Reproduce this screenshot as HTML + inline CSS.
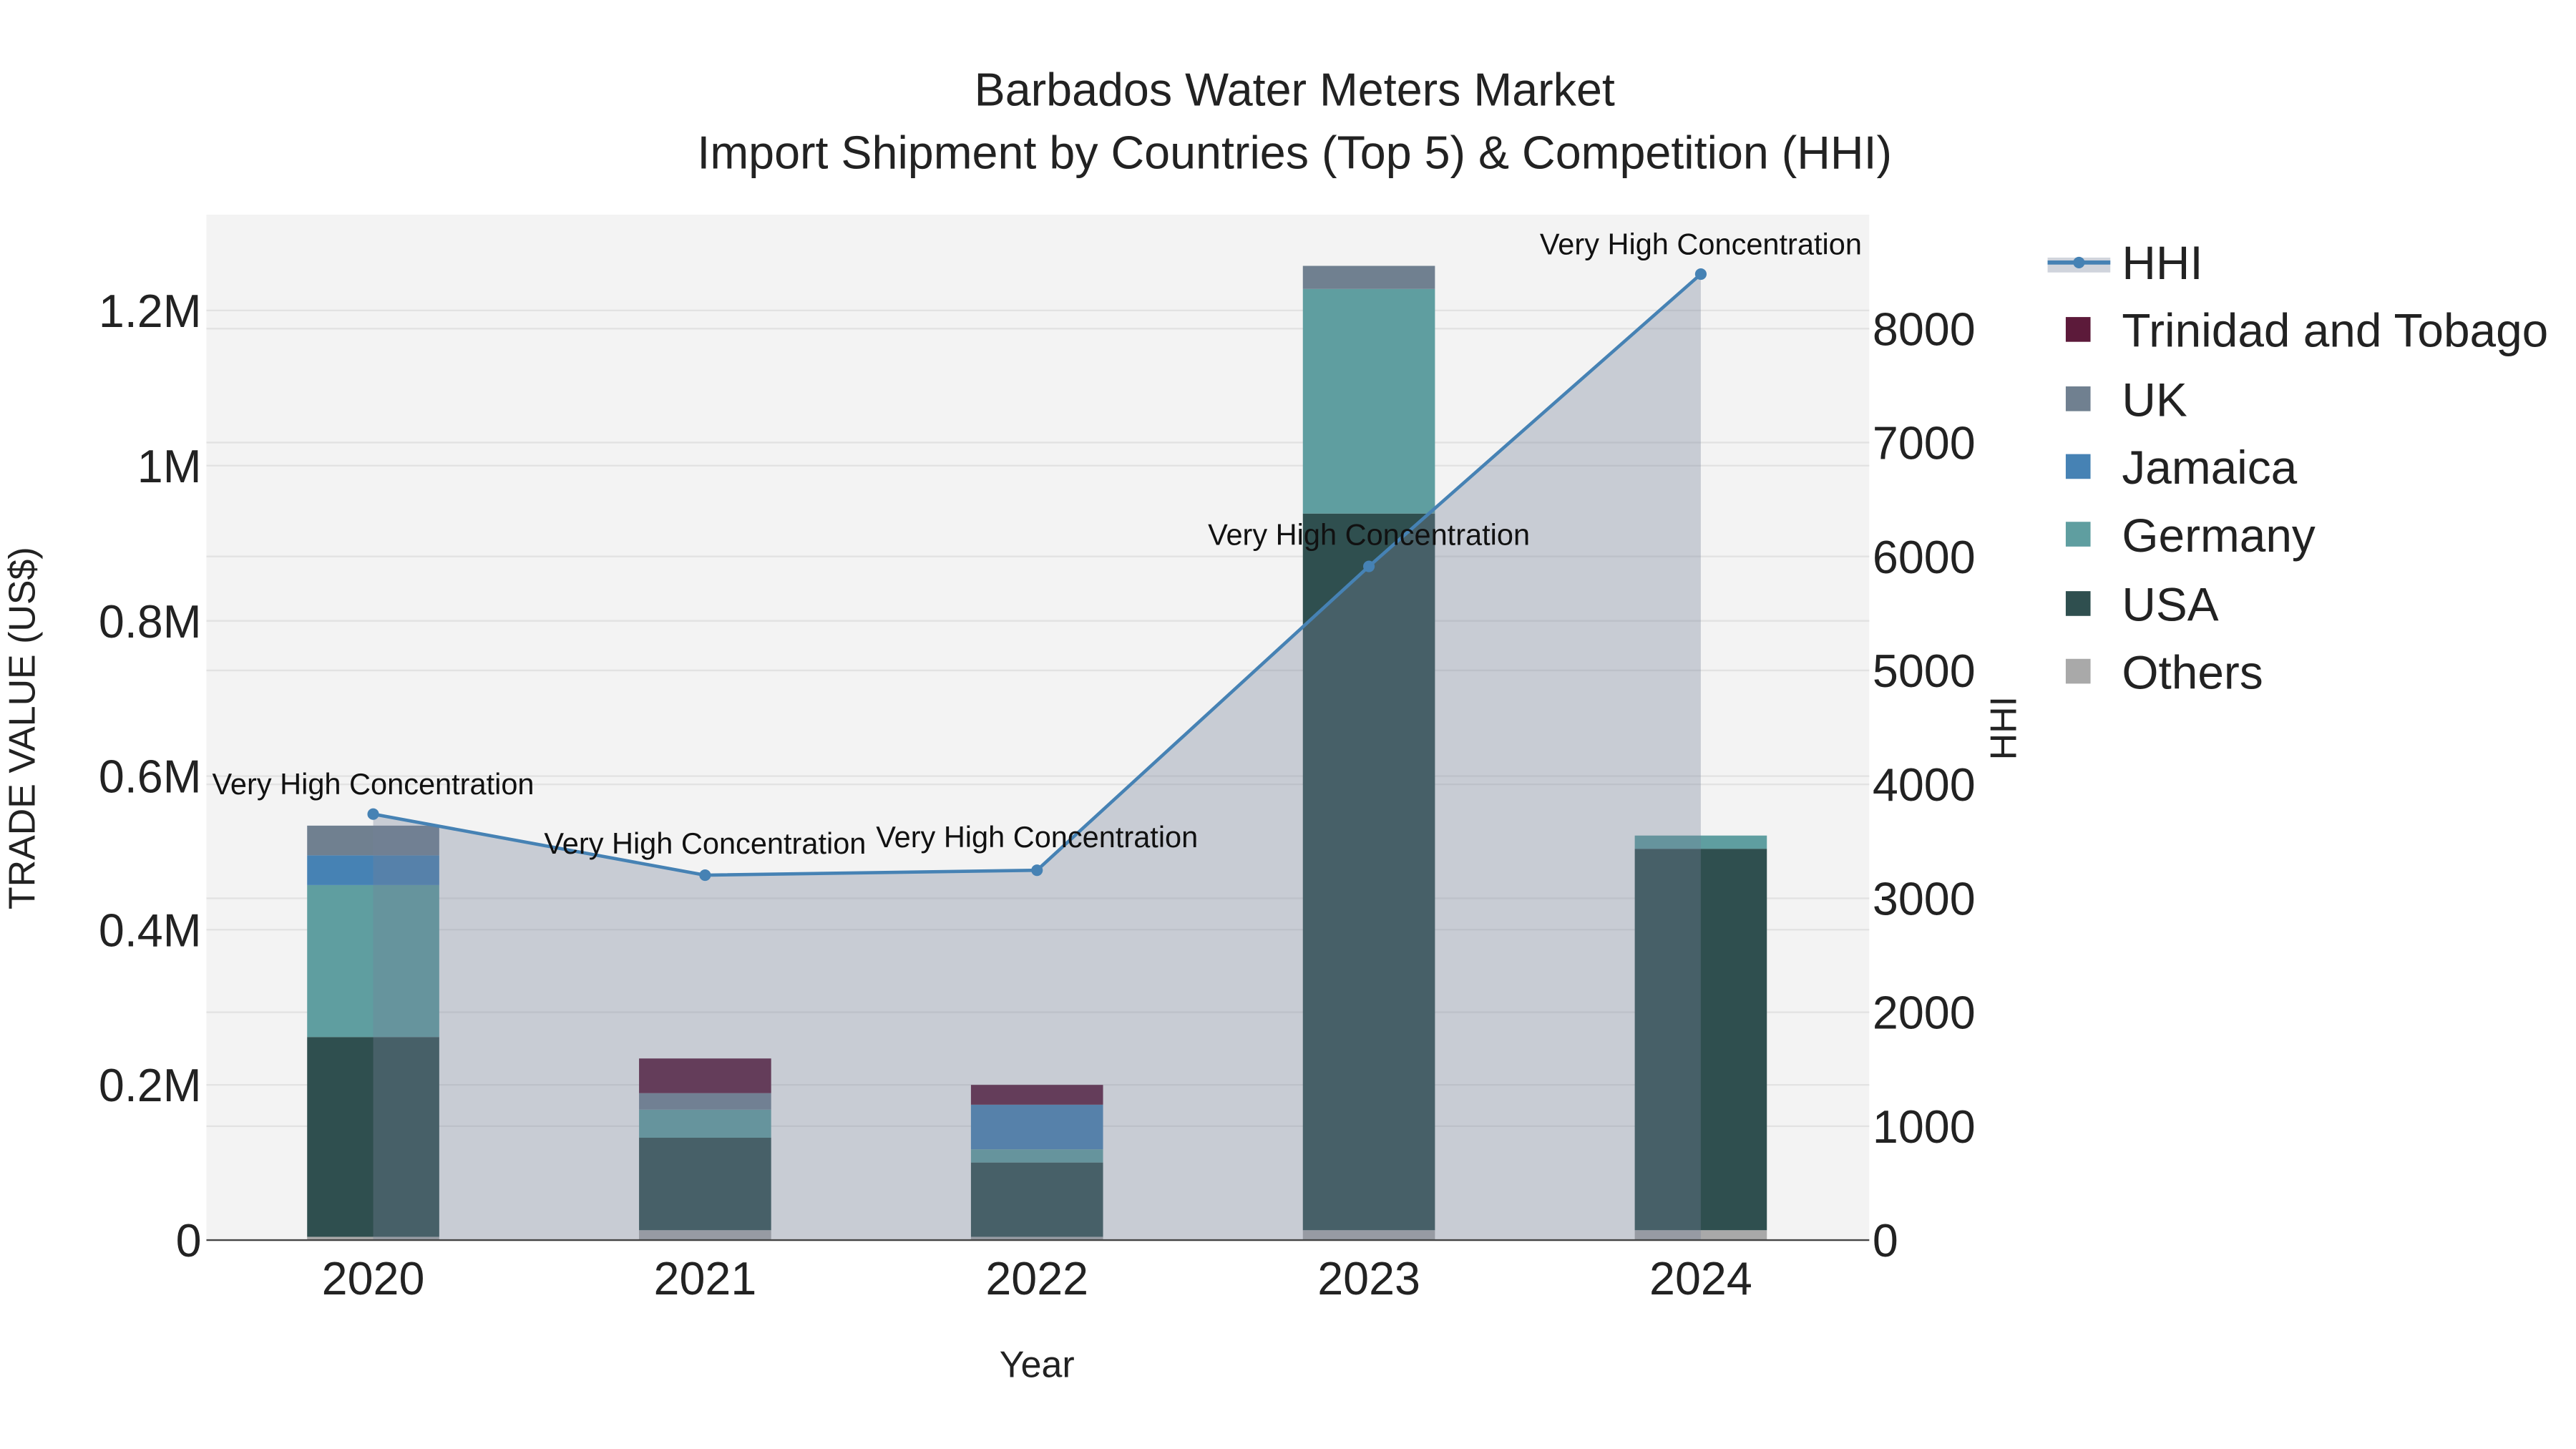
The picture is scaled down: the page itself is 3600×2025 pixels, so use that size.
<!DOCTYPE html>
<html><head><meta charset="utf-8"><style>html,body{margin:0;padding:0;background:#fff}svg{display:block}text{font-family:"Liberation Sans",Arial,sans-serif}</style></head><body>
<svg width="3600" height="2025" viewBox="0 0 1560 877.5" xmlns="http://www.w3.org/2000/svg">
<rect width="1560" height="877.5" fill="#fff"/>
<rect x="125" y="130" width="1007" height="621" fill="#f3f3f3"/>
<g stroke="#e2e2e2" stroke-width="1">
<line x1="125" x2="1132" y1="657" y2="657"/><line x1="125" x2="1132" y1="563" y2="563"/><line x1="125" x2="1132" y1="470" y2="470"/><line x1="125" x2="1132" y1="376" y2="376"/><line x1="125" x2="1132" y1="282" y2="282"/><line x1="125" x2="1132" y1="188" y2="188"/>
<line x1="125" x2="1132" y1="682" y2="682"/><line x1="125" x2="1132" y1="613" y2="613"/><line x1="125" x2="1132" y1="544" y2="544"/><line x1="125" x2="1132" y1="475" y2="475"/><line x1="125" x2="1132" y1="406" y2="406"/><line x1="125" x2="1132" y1="337" y2="337"/><line x1="125" x2="1132" y1="268" y2="268"/><line x1="125" x2="1132" y1="199" y2="199"/>
</g>
<g>
<rect x="186" y="749" width="80" height="2" fill="#a9a9a9"/><rect x="186" y="628" width="80" height="121" fill="#2f4f4f"/><rect x="186" y="536" width="80" height="92" fill="#5f9ea0"/><rect x="186" y="518" width="80" height="18" fill="#4682b4"/><rect x="186" y="500" width="80" height="18" fill="#708090"/>
<rect x="387" y="745" width="80" height="6" fill="#a9a9a9"/><rect x="387" y="689" width="80" height="56" fill="#2f4f4f"/><rect x="387" y="672" width="80" height="17" fill="#5f9ea0"/><rect x="387" y="662" width="80" height="10" fill="#708090"/><rect x="387" y="641" width="80" height="21" fill="#5c1a3a"/>
<rect x="588" y="749" width="80" height="2" fill="#a9a9a9"/><rect x="588" y="704" width="80" height="45" fill="#2f4f4f"/><rect x="588" y="696" width="80" height="8" fill="#5f9ea0"/><rect x="588" y="669" width="80" height="27" fill="#4682b4"/><rect x="588" y="657" width="80" height="12" fill="#5c1a3a"/>
<rect x="789" y="745" width="80" height="6" fill="#a9a9a9"/><rect x="789" y="311" width="80" height="434" fill="#2f4f4f"/><rect x="789" y="175" width="80" height="136" fill="#5f9ea0"/><rect x="789" y="161" width="80" height="14" fill="#708090"/>
<rect x="990" y="745" width="80" height="6" fill="#a9a9a9"/><rect x="990" y="514" width="80" height="231" fill="#2f4f4f"/><rect x="990" y="506" width="80" height="8" fill="#5f9ea0"/>
</g>
<polygon points="226,493 427,530 628,527 829,343 1030,166 1030,751 226,751" fill="rgb(117,128,152)" fill-opacity="0.34"/>
<line x1="125" x2="1132" y1="751" y2="751" stroke="#444" stroke-width="1"/>
<polyline points="226,493 427,530 628,527 829,343 1030,166" fill="none" stroke="#4682b4" stroke-width="2"/>
<g fill="#4682b4"><circle cx="226" cy="493" r="3.5"/><circle cx="427" cy="530" r="3.5"/><circle cx="628" cy="527" r="3.5"/><circle cx="829" cy="343" r="3.5"/><circle cx="1030" cy="166" r="3.5"/></g>
<g font-size="18" text-anchor="middle" fill="#111">
<text x="226" y="481">Very High Concentration</text><text x="427" y="517">Very High Concentration</text><text x="628" y="513">Very High Concentration</text><text x="829" y="330">Very High Concentration</text><text x="1030" y="154">Very High Concentration</text>
</g>
<g font-size="28" text-anchor="end" fill="#222">
<text x="122" y="761">0</text><text x="122" y="667">0.2M</text><text x="122" y="573">0.4M</text><text x="122" y="480">0.6M</text><text x="122" y="386">0.8M</text><text x="122" y="292">1M</text><text x="122" y="198">1.2M</text>
</g>
<g font-size="28" text-anchor="start" fill="#222">
<text x="1134" y="761">0</text><text x="1134" y="692">1000</text><text x="1134" y="623">2000</text><text x="1134" y="554">3000</text><text x="1134" y="485">4000</text><text x="1134" y="416">5000</text><text x="1134" y="347">6000</text><text x="1134" y="278">7000</text><text x="1134" y="209">8000</text>
</g>
<g font-size="28" text-anchor="middle" fill="#222">
<text x="226" y="784">2020</text><text x="427" y="784">2021</text><text x="628" y="784">2022</text><text x="829" y="784">2023</text><text x="1030" y="784">2024</text>
</g>
<text x="628" y="834" font-size="22.5" text-anchor="middle" fill="#222">Year</text>
<text transform="translate(21,441) rotate(-90)" font-size="22.5" text-anchor="middle" fill="#222">TRADE VALUE (US$)</text>
<text transform="translate(1221,441) rotate(-90)" font-size="22.5" text-anchor="middle" fill="#222">HHI</text>
<g font-size="28" text-anchor="middle" fill="#222">
<text x="784" y="64">Barbados Water Meters Market</text>
<text x="784" y="102">Import Shipment by Countries (Top 5) &amp; Competition (HHI)</text>
</g>
<rect x="1240" y="156" width="38" height="9" fill="rgb(117,128,152)" fill-opacity="0.34"/>
<line x1="1240" x2="1278" y1="159" y2="159" stroke="#4682b4" stroke-width="2.5"/><circle cx="1259" cy="159" r="3.5" fill="#4682b4"/>
<g>
<rect x="1251" y="192" width="15" height="15" fill="#5c1a3a"/><rect x="1251" y="234" width="15" height="15" fill="#708090"/><rect x="1251" y="275" width="15" height="15" fill="#4682b4"/><rect x="1251" y="316" width="15" height="15" fill="#5f9ea0"/><rect x="1251" y="358" width="15" height="15" fill="#2f4f4f"/><rect x="1251" y="399" width="15" height="15" fill="#a9a9a9"/>
</g>
<g font-size="28.5" fill="#222">
<text x="1285" y="169">HHI</text><text x="1285" y="210">Trinidad and Tobago</text><text x="1285" y="252">UK</text><text x="1285" y="293">Jamaica</text><text x="1285" y="334">Germany</text><text x="1285" y="376">USA</text><text x="1285" y="417">Others</text>
</g>
</svg>
</body></html>
